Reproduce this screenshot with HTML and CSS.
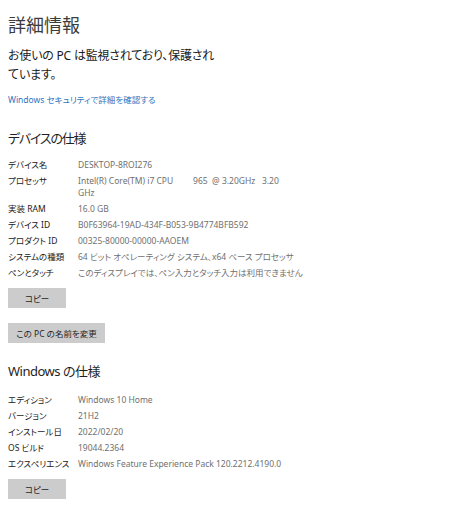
FILE: index.html
```html
<!DOCTYPE html>
<html lang="ja">
<head>
<meta charset="utf-8">
<title>詳細情報</title>
<link rel="stylesheet" href="styles.css">
</head>
<body>
<main class="page">
  <h1 class="title">詳細情報</h1>
  <p class="status">お使いの PC は監視されており、保護され<br>ています。</p>
  <a class="link" href="#">Windows セキュリティで詳細を確認する</a>

  <h2 class="section">デバイスの仕様</h2>
  <dl class="specs">
    <div class="row"><dt>デバイス名</dt><dd>DESKTOP-8ROI276</dd></div>
    <div class="row"><dt>プロセッサ</dt><dd class="pre">Intel(R) Core(TM) i7 CPU         965  @ 3.20GHz   3.20 GHz</dd></div>
    <div class="row"><dt>実装 RAM</dt><dd>16.0 GB</dd></div>
    <div class="row"><dt>デバイス ID</dt><dd>B0F63964-19AD-434F-B053-9B4774BFB592</dd></div>
    <div class="row"><dt>プロダクト ID</dt><dd>00325-80000-00000-AAOEM</dd></div>
    <div class="row"><dt>システムの種類</dt><dd>64 ビット オペレーティング システム、x64 ベース プロセッサ</dd></div>
    <div class="row"><dt>ペンとタッチ</dt><dd>このディスプレイでは、ペン入力とタッチ入力は利用できません</dd></div>
  </dl>
  <button class="btn btn-copy" type="button">コピー</button>
  <button class="btn btn-rename" type="button">この PC の名前を変更</button>

  <h2 class="section section-win">Windows の仕様</h2>
  <dl class="specs specs-win">
    <div class="row"><dt>エディション</dt><dd>Windows 10 Home</dd></div>
    <div class="row"><dt>バージョン</dt><dd>21H2</dd></div>
    <div class="row"><dt>インストール日</dt><dd>2022/02/20</dd></div>
    <div class="row"><dt>OS ビルド</dt><dd>19044.2364</dd></div>
    <div class="row"><dt>エクスペリエンス</dt><dd>Windows Feature Experience Pack 120.2212.4190.0</dd></div>
  </dl>
  <button class="btn btn-copy btn-last" type="button">コピー</button>
</main>
</body>
</html>
```

FILE: styles.css
```css
html, body {
  margin: 0;
  padding: 0;
  background: #ffffff;
}

body {
  font-family: "Noto Sans", "Noto Sans CJK JP", sans-serif;
  font-feature-settings: "palt" 1;
  color: #1f1f1f;
}

.page {
  display: flex;
  flex-direction: column;
  align-items: flex-start;
  padding: 13px 0 0 8px;
}

.title {
  margin: 0;
  font-size: 18px;
  line-height: 24px;
  font-weight: 400;
  color: #3c3c3c;
}

.status {
  margin: 9px 0 0;
  font-size: 12px;
  letter-spacing: -0.2px;
  line-height: 19px;
  color: #1a1a1a;
}

.link {
  margin-top: 10px;
  font-size: 8.5px;
  line-height: 12px;
  color: #2f74bf;
  text-decoration: none;
}

.section {
  margin: 22px 0 0;
  font-size: 13px;
  letter-spacing: -1.2px;
  line-height: 20px;
  font-weight: 400;
  color: #1f1f1f;
}

.section-win {
  margin-top: 18px;
  letter-spacing: -0.5px;
}

.specs {
  margin: 11px 0 0;
  display: flex;
  flex-direction: column;
  gap: 4px;
}

.specs-win {
  margin-top: 13px;
}

.row {
  display: grid;
  grid-template-columns: 70px 214px;
  font-size: 8.5px;
  line-height: 12px;
}

.row dt {
  color: #1a1a1a;
}

.row dd {
  margin: 0;
  color: #707070;
  white-space: nowrap;
}

.row dd.pre {
  white-space: pre-wrap;
}

.btn {
  margin-top: 9px;
  height: 20px;
  padding: 0 12px;
  border: none;
  background: #cccccc;
  font-family: "Noto Sans", "Noto Sans CJK JP", sans-serif;
  font-feature-settings: "palt" 1;
  font-size: 8.5px;
  color: #1f1f1f;
}

.btn-copy {
  width: 58px;
}

.btn-rename {
  margin-top: 15px;
  width: 97px;
  padding: 0;
}

.btn-last {
  margin-top: 9px;
}
```
